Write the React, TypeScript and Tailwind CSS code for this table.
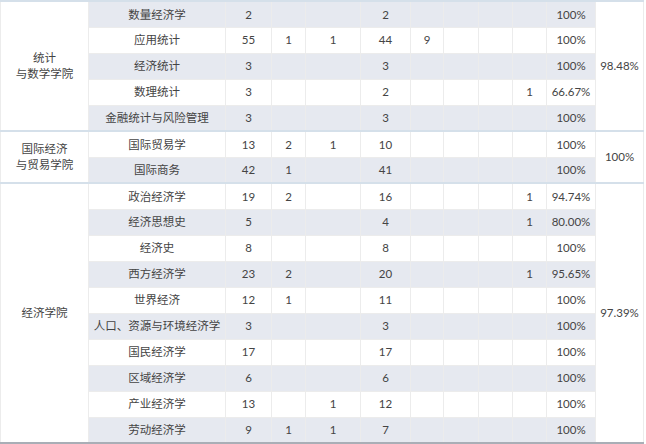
import React from "react";

type Row = { major: string; v: (string | number)[]; rate: string };
type Group = { name: string[]; rate: string; rows: Row[] };

const groups: Group[] = [
  {
    name: ["统计", "与数学学院"],
    rate: "98.48%",
    rows: [
      { major: "数量经济学", v: [2, "", "", 2, "", "", "", ""], rate: "100%" },
      { major: "应用统计", v: [55, 1, 1, 44, 9, "", "", ""], rate: "100%" },
      { major: "经济统计", v: [3, "", "", 3, "", "", "", ""], rate: "100%" },
      { major: "数理统计", v: [3, "", "", 2, "", "", "", 1], rate: "66.67%" },
      { major: "金融统计与风险管理", v: [3, "", "", 3, "", "", "", ""], rate: "100%" },
    ],
  },
  {
    name: ["国际经济", "与贸易学院"],
    rate: "100%",
    rows: [
      { major: "国际贸易学", v: [13, 2, 1, 10, "", "", "", ""], rate: "100%" },
      { major: "国际商务", v: [42, 1, "", 41, "", "", "", ""], rate: "100%" },
    ],
  },
  {
    name: ["经济学院"],
    rate: "97.39%",
    rows: [
      { major: "政治经济学", v: [19, 2, "", 16, "", "", "", 1], rate: "94.74%" },
      { major: "经济思想史", v: [5, "", "", 4, "", "", "", 1], rate: "80.00%" },
      { major: "经济史", v: [8, "", "", 8, "", "", "", ""], rate: "100%" },
      { major: "西方经济学", v: [23, 2, "", 20, "", "", "", 1], rate: "95.65%" },
      { major: "世界经济", v: [12, 1, "", 11, "", "", "", ""], rate: "100%" },
      { major: "人口、资源与环境经济学", v: [3, "", "", 3, "", "", "", ""], rate: "100%" },
      { major: "国民经济学", v: [17, "", "", 17, "", "", "", ""], rate: "100%" },
      { major: "区域经济学", v: [6, "", "", 6, "", "", "", ""], rate: "100%" },
      { major: "产业经济学", v: [13, "", 1, 12, "", "", "", ""], rate: "100%" },
      { major: "劳动经济学", v: [9, 1, 1, 7, "", "", "", ""], rate: "100%" },
    ],
  },
];

const widths = [88, 137, 46, 34, 55, 50, 33, 35, 34, 34, 49, 48];

export default function App() {
  let idx = 0;
  return (
    <div className="w-[646px] h-[444px] bg-white overflow-hidden">
      <table
        className="table-fixed border-collapse w-[644px] border-b-2 border-b-[#a9aeb6] text-[11.5px] text-[#444]"
        style={{ fontFamily: '"Lato", "Noto Sans CJK SC", sans-serif' }}
      >
        <colgroup>
          {widths.map((w, i) => (
            <col key={i} style={{ width: w }} />
          ))}
        </colgroup>
        <tbody>
          {groups.map((g, gi) =>
            g.rows.map((r, ri) => {
              const shaded = idx++ % 2 === 0;
              const bg = shaded ? "bg-[#e6e9f0]" : "bg-white";
              const top = ri === 0 ? "border-t-2 border-t-[#d5e0ea]" : "";
              return (
                <tr key={`${gi}-${ri}`} className="h-[26px]">
                  {ri === 0 && (
                    <td
                      rowSpan={g.rows.length}
                      className="border border-[#ececec] border-t-2 border-t-[#d5e0ea] bg-white text-center align-middle leading-[16px] p-0"
                    >
                      {g.name.map((n, k) => (
                        <div key={k}>{n}</div>
                      ))}
                    </td>
                  )}
                  <td className={`border border-[#ececec] ${top} ${bg} text-center p-0 whitespace-nowrap`}>{r.major}</td>
                  {r.v.map((v, k) => (
                    <td key={k} className={`border border-[#ececec] ${top} ${bg} text-center p-0`}>
                      {v}
                    </td>
                  ))}
                  <td className={`border border-[#ececec] ${top} ${bg} text-center p-0`}>{r.rate}</td>
                  {ri === 0 && (
                    <td
                      rowSpan={g.rows.length}
                      className="border border-[#ececec] border-t-2 border-t-[#d5e0ea] bg-white text-center align-middle p-0"
                    >
                      {g.rate}
                    </td>
                  )}
                </tr>
              );
            })
          )}
        </tbody>
      </table>
    </div>
  );
}
